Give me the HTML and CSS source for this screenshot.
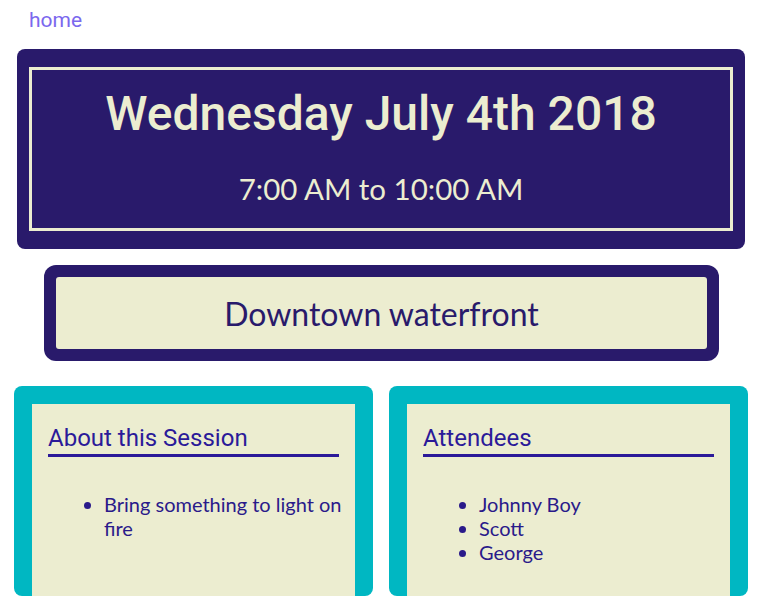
FILE: index.html
```html
<!DOCTYPE html>
<html>
<head>
<meta charset="utf-8">
<link rel="stylesheet" href="styles.css">
</head>
<body>
<nav class="nav"><a class="home-link" href="#">home</a></nav>
<header class="date-box">
  <div class="date-inner">
    <h1 class="date-title">Wednesday July 4th 2018</h1>
    <p class="date-time">7:00 AM to 10:00 AM</p>
  </div>
</header>
<section class="location-box">
  <div class="location-inner">Downtown waterfront</div>
</section>
<main class="cards">
  <div class="card">
    <div class="card-inner">
      <h2 class="card-title">About this Session</h2>
      <ul class="card-list">
        <li>Bring something to light on fire</li>
      </ul>
    </div>
  </div>
  <div class="card">
    <div class="card-inner">
      <h2 class="card-title">Attendees</h2>
      <ul class="card-list">
        <li>Johnny Boy</li>
        <li>Scott</li>
        <li>George</li>
      </ul>
    </div>
  </div>
</main>
</body>
</html>
```
FILE: styles.css
```css
html, body {
  margin: 0;
  padding: 0;
  background: #ffffff;
}
body {
  font-family: "Lato", "Liberation Sans", sans-serif;
  overflow: hidden;
  height: 596px;
}
.nav {
  height: 49px;
  padding-left: 29px;
  box-sizing: border-box;
  padding-top: 6px;
}
.home-link {
  font-family: "Roboto", sans-serif;
  font-size: 21px;
  line-height: 28px;
  color: #7b68ee;
  text-decoration: none;
}
.date-box {
  margin: 0 19px 0 17px;
  background: #291a6b;
  border-radius: 8px;
  padding: 18px 12px;
}
.date-inner {
  border: 3px solid #ecedd0;
  height: 158px;
  text-align: center;
  color: #ecedd0;
  box-sizing: content-box;
}
.date-title {
  font-family: "Roboto", sans-serif;
  font-weight: 500;
  font-size: 48px;
  line-height: 58px;
  margin: 15px 0 0;
}
.date-time {
  font-family: "Lato", sans-serif;
  font-size: 29.5px;
  line-height: 38px;
  margin: 27px 0 0;
}
.location-box {
  margin: 16px 45px 0 44px;
  background: #291a6b;
  border-radius: 12px;
  padding: 12px;
}
.location-inner {
  background: #ecedd0;
  border-radius: 3px;
  height: 72px;
  display: flex;
  align-items: center;
  justify-content: center;
  font-size: 32px;
  color: #291a6b;
}
.cards {
  display: grid;
  grid-template-columns: 359px 359px;
  column-gap: 16px;
  margin: 25px 0 0 14px;
}
.card {
  background: #00b7c2;
  border-radius: 8px;
  padding: 18px 18px 0;
  height: 210px;
  box-sizing: border-box;
}
.card-inner {
  background: #ecedd0;
  height: 100%;
  padding: 20px 16px 0;
  color: #2b1a99;
}
.card-title {
  font-family: "Roboto", sans-serif;
  font-weight: 400;
  font-size: 24px;
  line-height: 28px;
  margin: 0;
  padding-bottom: 2px;
  border-bottom: 3px solid #2b1a99;
}
.card-list {
  margin: 35px -6px 0 0;
  padding-left: 56px;
  font-size: 20px;
  line-height: 24px;
  color: #2a1a8a;
}
```
